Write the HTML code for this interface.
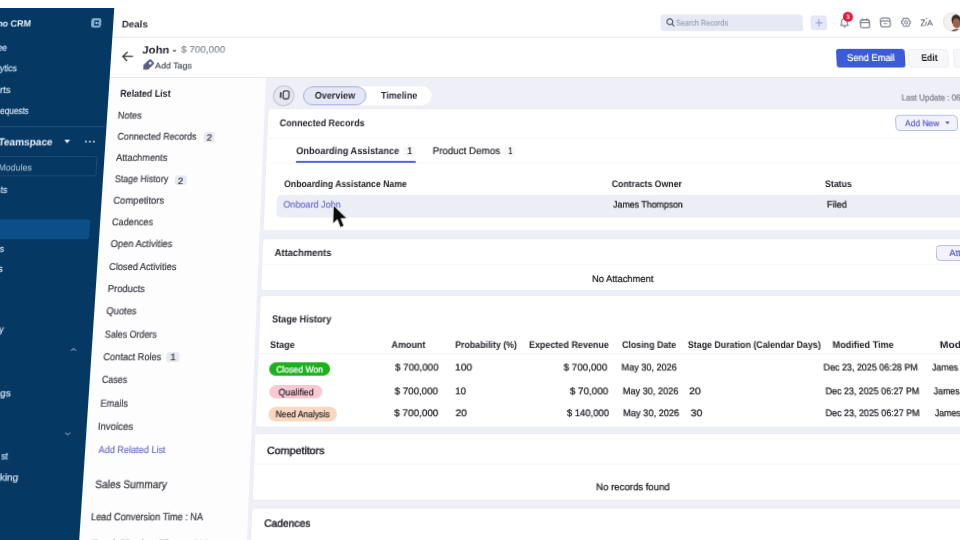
<!DOCTYPE html>
<html><head><meta charset="utf-8">
<style>
html,body{margin:0;padding:0;background:#fff;}
body{width:960px;height:540px;overflow:hidden;position:relative;font-family:"Liberation Sans",sans-serif;text-rendering:geometricPrecision;}
#flat{position:absolute;left:0;top:0;width:960px;height:540px;transform-origin:0 0;transform:matrix3d(1,0,0,0,-0.08088463,0.9582431,0,-0.0001546551,0,0,1,0,21.83885,11.27436,0,1.041757);}
#flat div{position:absolute;}
#flat .t{white-space:nowrap;line-height:1;transform-origin:0 0;-webkit-text-stroke:0.22px;}
#flat svg{position:absolute;overflow:visible;}
</style></head><body>
<div id="flat">
<div style="left:250.00px;top:71.59px;width:850.00px;height:628.41px;background:#efeff8"></div>
<div style="left:96.00px;top:71.59px;width:162.00px;height:628.41px;background:#fdfdfe"></div>
<div style="left:96.00px;top:28.29px;width:1004.00px;height:1.08px;background:#e5e5ea"></div>
<div style="left:96.00px;top:71.06px;width:1004.00px;height:1.06px;background:#e6e6ee"></div>
<div style="left:-80.00px;top:-2.63px;width:176.60px;height:702.63px;background:#053964"></div>
<div style="left:-80.00px;top:123.03px;width:174.50px;height:0.94px;background:#27527f"></div>
<div style="left:-13.61px;top:154.06px;width:103.87px;height:20.97px;border:1px solid #1d4a76;border-radius:3px;box-sizing:border-box"></div>
<div style="left:-13.36px;top:219.10px;width:100.63px;height:20.35px;background:#0a4f88;border-radius:3px"></div>
<div class="t" style="left:-34.89px;top:9.54px;font-size:9.823px;font-weight:700;-webkit-text-stroke:0;transform:scaleX(0.9500);color:#e6eef8;">Zoho CRM</div>
<div class="t" style="left:-21.22px;top:36.13px;font-size:9.934px;transform:scaleX(0.8805);color:#cfdef1;-webkit-text-stroke:0.25px">ee</div>
<div class="t" style="left:-16.62px;top:57.95px;font-size:9.902px;transform:scaleX(0.8912);color:#cfdef1;-webkit-text-stroke:0.25px">ytics</div>
<div class="t" style="left:-15.44px;top:80.69px;font-size:9.868px;transform:scaleX(1.0115);color:#cfdef1;-webkit-text-stroke:0.25px">rts</div>
<div class="t" style="left:-13.40px;top:103.27px;font-size:9.835px;transform:scaleX(0.8479);color:#cfdef1;-webkit-text-stroke:0.25px">equests</div>
<div class="t" style="left:-6.50px;top:184.91px;font-size:9.714px;transform:scaleX(0.8996);color:#cfdef1;-webkit-text-stroke:0.25px">ts</div>
<div class="t" style="left:-1.83px;top:245.08px;font-size:9.624px;transform:scaleX(0.9240);color:#cfdef1;-webkit-text-stroke:0.25px">s</div>
<div class="t" style="left:-2.25px;top:264.76px;font-size:9.595px;transform:scaleX(0.9713);color:#cfdef1;-webkit-text-stroke:0.25px">s</div>
<div class="t" style="left:4.19px;top:325.35px;font-size:9.505px;transform:scaleX(0.9382);color:#cfdef1;-webkit-text-stroke:0.25px">y</div>
<div class="t" style="left:9.51px;top:386.26px;font-size:9.415px;transform:scaleX(1.0531);color:#cfdef1;-webkit-text-stroke:0.25px">gs</div>
<div class="t" style="left:16.24px;top:446.69px;font-size:9.325px;transform:scaleX(0.8535);color:#cfdef1;-webkit-text-stroke:0.25px">st</div>
<div class="t" style="left:16.25px;top:466.77px;font-size:9.296px;transform:scaleX(1.0607);color:#cfdef1;-webkit-text-stroke:0.25px">king</div>
<div class="t" style="left:-12.24px;top:135.16px;font-size:10.826px;font-weight:700;-webkit-text-stroke:0;transform:scaleX(0.9469);color:#e9f0f9;">Teamspace</div>
<div class="t" style="left:-9.88px;top:161.55px;font-size:9.453px;transform:scaleX(0.9500);color:#9fb3c9;">Modules</div>
<div class="t" style="left:105.95px;top:9.77px;font-size:10.578px;font-weight:700;-webkit-text-stroke:0;transform:scaleX(0.9598);color:#2e2e38;">Deals</div>
<div style="left:666.27px;top:4.21px;width:147.85px;height:17.94px;background:#e7e9f5;border-radius:3px"></div>
<div class="t" style="left:682.06px;top:9.02px;font-size:9.068px;transform:scaleX(0.8361);color:#9ca2b6;">Search Records</div>
<div style="left:822.24px;top:4.86px;width:17.05px;height:16.43px;background:#e5e7f7;border-radius:3px"></div>
<div class="t" style="left:128.92px;top:38.17px;font-size:11.436px;font-weight:700;-webkit-text-stroke:0;transform:scaleX(1.0236);color:#232330;">John -</div>
<div class="t" style="left:169.16px;top:38.28px;font-size:9.931px;transform:scaleX(1.0341);color:#888c99;">$ 700,000</div>
<div class="t" style="left:143.05px;top:54.58px;font-size:9.007px;transform:scaleX(1.0213);color:#50545f;">Add Tags</div>
<div style="left:847.43px;top:40.64px;width:70.82px;height:20.52px;background:#3c5bd8;border-radius:3px"></div>
<div class="t" style="left:858.26px;top:46.88px;font-size:10.369px;transform:scaleX(0.9313);color:#ffffff;">Send Email</div>
<div style="left:921.25px;top:40.64px;width:42.18px;height:20.52px;background:#f7f7fa;border:1px solid #ececf2;border-radius:3px;box-sizing:border-box"></div>
<div class="t" style="left:934.53px;top:47.48px;font-size:10.369px;font-weight:700;-webkit-text-stroke:0;transform:scaleX(0.8484);color:#15151a;">Edit</div>
<div style="left:967.98px;top:40.64px;width:48.18px;height:20.52px;background:#f7f7fa;border:1px solid #ececf2;border-radius:3px;box-sizing:border-box"></div>
<div class="t" style="left:911.76px;top:88.37px;font-size:9.409px;transform:scaleX(0.8800);color:#7a7d88;">Last Update : 06:28 PM</div>
<div style="left:296.70px;top:80.88px;width:132.37px;height:19.80px;background:#ffffff;border-radius:10px"></div>
<div style="left:296.70px;top:80.88px;width:65.47px;height:19.80px;background:#e4e7f8;border:1px solid #a3aadb;border-radius:10px;box-sizing:border-box"></div>
<div class="t" style="left:309.16px;top:87.03px;font-size:10.307px;font-weight:700;-webkit-text-stroke:0;transform:scaleX(0.9044);color:#2a2a35;">Overview</div>
<div class="t" style="left:376.96px;top:86.82px;font-size:10.308px;font-weight:700;-webkit-text-stroke:0;transform:scaleX(0.9010);color:#2a2a35;">Timeline</div>
<div style="left:266.17px;top:79.87px;width:22.20px;height:21.86px;background:#e6e6ee;border:1px solid #c4c4cf;border-radius:50%;box-sizing:border-box"></div>
<div class="t" style="left:108.91px;top:84.75px;font-size:10.460px;font-weight:700;-webkit-text-stroke:0;transform:scaleX(0.8721);color:#22222c;">Related List</div>
<div class="t" style="left:108.37px;top:107.82px;font-size:10.274px;transform:scaleX(0.9112);color:#404048;">Notes</div>
<div class="t" style="left:109.02px;top:129.80px;font-size:10.240px;transform:scaleX(0.8918);color:#404048;">Connected Records</div>
<div class="t" style="left:109.14px;top:152.15px;font-size:10.206px;transform:scaleX(0.9204);color:#404048;">Attachments</div>
<div class="t" style="left:108.71px;top:174.25px;font-size:10.171px;transform:scaleX(0.8884);color:#404048;">Stage History</div>
<div class="t" style="left:108.92px;top:196.41px;font-size:10.137px;transform:scaleX(0.9398);color:#404048;">Competitors</div>
<div class="t" style="left:108.51px;top:218.21px;font-size:10.103px;transform:scaleX(0.9069);color:#404048;">Cadences</div>
<div class="t" style="left:108.95px;top:240.47px;font-size:10.069px;transform:scaleX(0.9307);color:#404048;">Open Activities</div>
<div class="t" style="left:108.93px;top:262.78px;font-size:10.034px;transform:scaleX(0.9230);color:#404048;">Closed Activities</div>
<div class="t" style="left:108.78px;top:285.24px;font-size:9.999px;transform:scaleX(0.9398);color:#404048;">Products</div>
<div class="t" style="left:108.74px;top:307.35px;font-size:9.965px;transform:scaleX(0.9353);color:#404048;">Quotes</div>
<div class="t" style="left:108.81px;top:329.60px;font-size:9.930px;transform:scaleX(0.8888);color:#404048;">Sales Orders</div>
<div class="t" style="left:108.92px;top:351.98px;font-size:9.896px;transform:scaleX(0.9190);color:#404048;">Contact Roles</div>
<div class="t" style="left:109.00px;top:374.31px;font-size:9.861px;transform:scaleX(0.8883);color:#404048;">Cases</div>
<div class="t" style="left:108.80px;top:396.68px;font-size:9.826px;transform:scaleX(0.9159);color:#404048;">Emails</div>
<div class="t" style="left:108.36px;top:418.79px;font-size:9.792px;transform:scaleX(0.9619);color:#404048;">Invoices</div>
<div style="left:197.00px;top:128.99px;width:11.23px;height:10.63px;background:#e9eaf1;border-radius:3px"></div>
<div class="t" style="left:199.88px;top:130.51px;font-size:9.498px;transform:scaleX(1.0396);color:#3c3c48;">2</div>
<div style="left:169.59px;top:173.58px;width:12.37px;height:10.49px;background:#e9eaf1;border-radius:3px"></div>
<div class="t" style="left:173.05px;top:175.06px;font-size:9.433px;transform:scaleX(1.0396);color:#3c3c48;">2</div>
<div style="left:171.34px;top:350.97px;width:12.73px;height:9.93px;background:#e9eaf1;border-radius:3px"></div>
<div class="t" style="left:174.78px;top:352.27px;font-size:9.179px;transform:scaleX(1.0874);color:#3c3c48;">1</div>
<div class="t" style="left:110.27px;top:441.11px;font-size:9.334px;transform:scaleX(0.9543);color:#7377c9;">Add Related List</div>
<div class="t" style="left:108.99px;top:472.92px;font-size:10.552px;transform:scaleX(0.9317);color:#44444c;-webkit-text-stroke:0.3px">Sales Summary</div>
<div class="t" style="left:106.68px;top:504.08px;font-size:9.800px;transform:scaleX(0.8999);color:#3a3a42;">Lead Conversion Time : NA</div>
<div class="t" style="left:108.94px;top:529.14px;font-size:9.761px;transform:scaleX(1.1281);color:#55555d;">Deal Closing Time : NA</div>
<div style="left:260.80px;top:104.15px;width:939.20px;height:126.41px;background:#ffffff;border:1px solid #ececf4;border-radius:3.5px;box-sizing:border-box"></div>
<div style="left:260.80px;top:238.14px;width:939.20px;height:52.59px;background:#ffffff;border:1px solid #ececf4;border-radius:3.5px;box-sizing:border-box"></div>
<div style="left:260.80px;top:295.40px;width:939.20px;height:128.16px;background:#ffffff;border:1px solid #ececf4;border-radius:3.5px;box-sizing:border-box"></div>
<div style="left:260.80px;top:428.80px;width:939.20px;height:64.70px;background:#ffffff;border:1px solid #ececf4;border-radius:3.5px;box-sizing:border-box"></div>
<div style="left:260.80px;top:499.18px;width:939.20px;height:174.01px;background:#ffffff;border:1px solid #ececf4;border-radius:3.5px;box-sizing:border-box"></div>
<div class="t" style="left:273.66px;top:115.87px;font-size:10.263px;font-weight:700;-webkit-text-stroke:0;transform:scaleX(0.8976);color:#22222c;">Connected Records</div>
<div style="left:904.17px;top:111.19px;width:63.75px;height:16.65px;background:#f1f2fb;border:1px solid #b9bde6;border-radius:4px;box-sizing:border-box"></div>
<div class="t" style="left:914.30px;top:115.83px;font-size:9.370px;transform:scaleX(0.9172);color:#5b62c9;">Add New</div>
<div style="left:401.26px;top:142.02px;width:13.24px;height:13.49px;background:#f8f8fb;border-radius:50%"></div>
<div class="t" style="left:405.03px;top:144.95px;font-size:10.069px;transform:scaleX(0.9536);color:#222;">1</div>
<div class="t" style="left:292.48px;top:144.97px;font-size:10.218px;font-weight:700;-webkit-text-stroke:0;transform:scaleX(0.9186);color:#25252e;">Onboarding Assistance</div>
<div class="t" style="left:431.44px;top:144.93px;font-size:10.365px;transform:scaleX(0.9618);color:#2a2a32;">Product Demos</div>
<div style="left:503.13px;top:142.02px;width:13.24px;height:13.49px;background:#f8f8fb;border-radius:50%"></div>
<div class="t" style="left:507.65px;top:144.95px;font-size:10.069px;transform:scaleX(0.7675);color:#222;">1</div>
<div style="left:292.46px;top:159.34px;width:122.03px;height:2.48px;background:#4b61d6;border-radius:1px"></div>
<div style="left:260.80px;top:134.52px;width:939.20px;height:0.63px;background:#f7f7fa"></div>
<div style="left:260.80px;top:161.30px;width:939.20px;height:0.62px;background:#fafafc"></div>
<div class="t" style="left:280.50px;top:178.73px;font-size:9.724px;font-weight:700;-webkit-text-stroke:0;transform:scaleX(0.8999);color:#222228;">Onboarding Assistance Name</div>
<div class="t" style="left:613.37px;top:178.63px;font-size:9.724px;font-weight:700;-webkit-text-stroke:0;transform:scaleX(0.9063);color:#222228;">Contracts Owner</div>
<div class="t" style="left:829.25px;top:178.63px;font-size:9.724px;font-weight:700;-webkit-text-stroke:0;transform:scaleX(0.9150);color:#222228;">Status</div>
<div style="left:274.35px;top:194.22px;width:730.39px;height:22.95px;background:#ededf5;border-radius:5px"></div>
<div class="t" style="left:281.16px;top:200.36px;font-size:9.691px;transform:scaleX(0.9437);color:#6d72d6;">Onboard John</div>
<div class="t" style="left:613.68px;top:200.36px;font-size:9.691px;transform:scaleX(0.9183);color:#16161c;">James Thompson</div>
<div class="t" style="left:829.75px;top:200.36px;font-size:9.691px;transform:scaleX(0.9575);color:#16161c;">Filed</div>
<div class="t" style="left:273.87px;top:248.53px;font-size:10.057px;font-weight:700;-webkit-text-stroke:0;transform:scaleX(0.9355);color:#22222c;">Attachments</div>
<div style="left:937.40px;top:244.70px;width:63.87px;height:16.29px;background:#f1f2fb;border:1px solid #b9bde6;border-radius:4px;box-sizing:border-box"></div>
<div class="t" style="left:950.62px;top:249.28px;font-size:9.181px;color:#5b62c9;">Attach</div>
<div style="left:260.80px;top:264.29px;width:939.20px;height:0.60px;background:#f8f8fa"></div>
<div class="t" style="left:592.16px;top:274.56px;font-size:9.581px;transform:scaleX(0.9764);color:#16161c;">No Attachment</div>
<div class="t" style="left:274.08px;top:314.56px;font-size:9.955px;font-weight:700;-webkit-text-stroke:0;transform:scaleX(0.9162);color:#22222c;">Stage History</div>
<div class="t" style="left:272.79px;top:340.07px;font-size:9.484px;font-weight:700;-webkit-text-stroke:0;transform:scaleX(0.9484);color:#222228;">Stage</div>
<div class="t" style="left:393.26px;top:340.07px;font-size:9.484px;font-weight:700;-webkit-text-stroke:0;transform:scaleX(0.9365);color:#222228;">Amount</div>
<div class="t" style="left:456.39px;top:340.07px;font-size:9.484px;font-weight:700;-webkit-text-stroke:0;transform:scaleX(0.9199);color:#222228;">Probability (%)</div>
<div class="t" style="left:529.34px;top:340.07px;font-size:9.484px;font-weight:700;-webkit-text-stroke:0;transform:scaleX(0.9363);color:#222228;">Expected Revenue</div>
<div class="t" style="left:620.83px;top:340.07px;font-size:9.484px;font-weight:700;-webkit-text-stroke:0;transform:scaleX(0.9216);color:#222228;">Closing Date</div>
<div class="t" style="left:686.16px;top:340.07px;font-size:9.484px;font-weight:700;-webkit-text-stroke:0;transform:scaleX(0.9247);color:#222228;">Stage Duration (Calendar Days)</div>
<div class="t" style="left:829.15px;top:340.07px;font-size:9.484px;font-weight:700;-webkit-text-stroke:0;transform:scaleX(0.9541);color:#222228;">Modified Time</div>
<div class="t" style="left:935.40px;top:340.07px;font-size:9.484px;font-weight:700;-webkit-text-stroke:0;transform:scaleX(1.0800);color:#222228;">Modified By</div>
<div style="left:260.80px;top:352.24px;width:939.20px;height:0.58px;background:#f4f4f7"></div>
<div style="left:272.83px;top:360.71px;width:60.28px;height:13.68px;background:#1db21d;border-radius:8px"></div>
<div class="t" style="left:280.19px;top:363.90px;font-size:9.019px;transform:scaleX(0.9402);color:#ffffff;">Closed Won</div>
<div style="left:273.69px;top:382.80px;width:52.71px;height:13.20px;background:#f9c8d1;border-radius:8px"></div>
<div class="t" style="left:283.01px;top:385.76px;font-size:8.988px;transform:scaleX(0.9783);color:#2a2a30;">Qualified</div>
<div style="left:273.66px;top:404.45px;width:67.59px;height:13.11px;background:#f9d7c0;border-radius:8px"></div>
<div class="t" style="left:281.01px;top:407.38px;font-size:8.957px;transform:scaleX(0.9323);color:#2a2a30;">Need Analysis</div>
<div class="t" style="left:397.39px;top:362.08px;font-size:9.451px;transform:scaleX(1.0199);color:#16161c;">$ 700,000</div>
<div class="t" style="left:456.43px;top:362.08px;font-size:9.451px;transform:scaleX(1.0793);color:#16161c;">100</div>
<div class="t" style="left:563.30px;top:362.08px;font-size:9.451px;transform:scaleX(1.0247);color:#16161c;">$ 700,000</div>
<div class="t" style="left:620.11px;top:362.08px;font-size:9.451px;transform:scaleX(0.9547);color:#16161c;">May 30, 2026</div>
<div class="t" style="left:819.08px;top:362.08px;font-size:9.451px;transform:scaleX(0.9376);color:#16161c;">Dec 23, 2025 06:28 PM</div>
<div class="t" style="left:925.81px;top:362.08px;font-size:9.451px;transform:scaleX(0.9200);color:#16161c;">James Thompson</div>
<div class="t" style="left:397.24px;top:384.05px;font-size:9.418px;transform:scaleX(1.0176);color:#16161c;">$ 700,000</div>
<div class="t" style="left:456.51px;top:384.05px;font-size:9.418px;color:#16161c;">10</div>
<div class="t" style="left:569.05px;top:384.05px;font-size:9.418px;transform:scaleX(1.0302);color:#16161c;">$ 70,000</div>
<div class="t" style="left:620.75px;top:384.05px;font-size:9.418px;transform:scaleX(0.9547);color:#16161c;">May 30, 2026</div>
<div class="t" style="left:686.43px;top:384.05px;font-size:9.418px;transform:scaleX(1.1187);color:#16161c;">20</div>
<div class="t" style="left:819.58px;top:384.05px;font-size:9.418px;transform:scaleX(0.9311);color:#16161c;">Dec 23, 2025 06:27 PM</div>
<div class="t" style="left:925.79px;top:384.05px;font-size:9.418px;transform:scaleX(0.9200);color:#16161c;">James Thompson</div>
<div class="t" style="left:397.08px;top:405.67px;font-size:9.386px;transform:scaleX(1.0365);color:#16161c;">$ 700,000</div>
<div class="t" style="left:456.94px;top:405.67px;font-size:9.386px;transform:scaleX(1.0678);color:#16161c;">20</div>
<div class="t" style="left:565.67px;top:405.67px;font-size:9.386px;transform:scaleX(0.9844);color:#16161c;">$ 140,000</div>
<div class="t" style="left:621.39px;top:405.67px;font-size:9.386px;transform:scaleX(0.9652);color:#16161c;">May 30, 2026</div>
<div class="t" style="left:687.02px;top:405.67px;font-size:9.386px;transform:scaleX(1.1026);color:#16161c;">30</div>
<div class="t" style="left:819.06px;top:405.67px;font-size:9.386px;transform:scaleX(0.9351);color:#16161c;">Dec 23, 2025 06:27 PM</div>
<div class="t" style="left:926.08px;top:405.67px;font-size:9.386px;transform:scaleX(0.9200);color:#16161c;">James Thompson</div>
<div class="t" style="left:273.75px;top:442.21px;font-size:9.897px;transform:scaleX(1.0505);color:#16161c;-webkit-text-stroke:0.35px #16161c">Competitors</div>
<div style="left:260.80px;top:458.44px;width:939.20px;height:0.57px;background:#f6f6f9"></div>
<div class="t" style="left:593.86px;top:475.54px;font-size:9.283px;color:#16161c;">No records found</div>
<div class="t" style="left:273.96px;top:510.30px;font-size:9.790px;transform:scaleX(1.0073);color:#16161c;-webkit-text-stroke:0.35px #16161c">Cadences</div>
<svg style="left:73.81px;top:7.56px;" width="10.40" height="10.27" viewBox="0 0 10.000 9.500" preserveAspectRatio="none"><rect x="0" y="0" width="10" height="9.5" rx="2.3" fill="#86acd6"/><rect x="3.2" y="2.3" width="4.6" height="5.1" fill="#053964"/><rect x="6.3" y="3.9" width="1.6" height="1.9" fill="#86acd6"/><circle cx="5.2" cy="4.85" r="1.05" fill="#b3d5f5"/></svg>
<svg style="left:55.21px;top:137.12px;" width="5.92" height="3.64" viewBox="0 0 5.800 3.500" preserveAspectRatio="none"><path d="M0 0 L5.8 0 L2.9 3.5 Z" fill="#e8f0fa"/></svg>
<svg style="left:75.62px;top:137.96px;" width="10.20" height="2.08" viewBox="0 0 10.000 2.000" preserveAspectRatio="none"><circle cx="1" cy="1" r="0.9" fill="#e8f0fa"/><circle cx="5" cy="1" r="0.9" fill="#e8f0fa"/><circle cx="9" cy="1" r="0.9" fill="#e8f0fa"/></svg>
<svg style="left:75.72px;top:347.07px;" width="5.93" height="3.42" viewBox="0 0 6.000 3.500" preserveAspectRatio="none"><path d="M0.5 3 L3 0.6 L5.5 3" fill="none" stroke="#6d90b8" stroke-width="1.1"/></svg>
<svg style="left:75.73px;top:428.04px;" width="5.85" height="3.33" viewBox="0 0 6.000 3.500" preserveAspectRatio="none"><path d="M0.5 0.6 L3 3 L5.5 0.6" fill="none" stroke="#6d90b8" stroke-width="1.1"/></svg>
<svg style="left:671.69px;top:8.21px;" width="8.84" height="9.30" viewBox="0 0 8.500 8.600" preserveAspectRatio="none"><circle cx="3.6" cy="3.6" r="2.9" fill="none" stroke="#5d6478" stroke-width="1.3"/><path d="M5.8 5.8 L8 8" stroke="#5d6478" stroke-width="1.3"/></svg>
<svg style="left:826.91px;top:9.08px;" width="7.69" height="8.00" viewBox="0 0 7.400 7.400" preserveAspectRatio="none"><path d="M3.7 0.2 V7.2 M0.2 3.7 H7.2" stroke="#8d95dc" stroke-width="1.0"/></svg>
<svg style="left:852.10px;top:6.70px;" width="10.40" height="11.89" viewBox="0 0 10.000 11.000" preserveAspectRatio="none"><path d="M1.2 8.2 Q2.2 7 2.2 5 Q2.2 1.6 5 1.6 Q7.8 1.6 7.8 5 Q7.8 7 8.8 8.2 Z" fill="none" stroke="#7b7f8b" stroke-width="1.1" stroke-linejoin="round"/><path d="M4 9.8 H6" stroke="#7b7f8b" stroke-width="1.1"/></svg>
<svg style="left:856.14px;top:1.17px;" width="10.41" height="10.83" viewBox="0 0 10.000 10.000" preserveAspectRatio="none"><circle cx="5" cy="5" r="5" fill="#e1183f"/><text x="5" y="7.3" font-size="6.5" font-weight="700" text-anchor="middle" fill="#fff" font-family="Liberation Sans">3</text></svg>
<svg style="left:872.97px;top:7.56px;" width="11.02" height="11.03" viewBox="0 0 10.600 10.200" preserveAspectRatio="none"><rect x="0.7" y="1.6" width="9.2" height="8" rx="2" fill="none" stroke="#7b7f8b" stroke-width="1.2"/><path d="M0.7 4.3 H9.9 M3.2 0.3 V2.4 M7.4 0.3 V2.4" stroke="#7b7f8b" stroke-width="1.1"/></svg>
<svg style="left:893.79px;top:7.13px;" width="11.54" height="11.24" viewBox="0 0 11.100 10.400" preserveAspectRatio="none"><rect x="0.7" y="0.8" width="9.7" height="8.8" rx="2.3" fill="none" stroke="#7b7f8b" stroke-width="1.2"/><path d="M0.7 4 H3 L3.9 3 L4.8 4 H6.3 L7.2 3 L8.1 4 H10.4 M3.8 6.3 H7.3" fill="none" stroke="#7b7f8b" stroke-width="1"/></svg>
<svg style="left:915.83px;top:7.35px;" width="10.40" height="10.81" viewBox="0 0 10.000 10.000" preserveAspectRatio="none"><path d="M9.50 5.00 L9.44 5.39 L9.28 5.75 L9.02 6.08 L8.70 6.35 L8.35 6.56 L8.03 6.75 L8.03 7.12 L8.01 7.53 L7.94 7.94 L7.79 8.33 L7.56 8.65 L7.25 8.90 L6.88 9.04 L6.48 9.08 L6.08 9.02 L5.68 8.88 L5.32 8.68 L5.00 8.50 L4.68 8.68 L4.32 8.88 L3.92 9.02 L3.52 9.08 L3.12 9.04 L2.75 8.90 L2.44 8.65 L2.21 8.33 L2.06 7.94 L1.99 7.53 L1.97 7.12 L1.97 6.75 L1.65 6.56 L1.30 6.35 L0.98 6.08 L0.72 5.75 L0.56 5.39 L0.50 5.00 L0.56 4.61 L0.72 4.25 L0.98 3.92 L1.30 3.65 L1.65 3.44 L1.97 3.25 L1.97 2.88 L1.99 2.47 L2.06 2.06 L2.21 1.67 L2.44 1.35 L2.75 1.10 L3.12 0.96 L3.52 0.92 L3.92 0.98 L4.32 1.12 L4.68 1.32 L5.00 1.50 L5.32 1.32 L5.68 1.12 L6.08 0.98 L6.48 0.92 L6.88 0.96 L7.25 1.10 L7.56 1.35 L7.79 1.67 L7.94 2.06 L8.01 2.47 L8.03 2.88 L8.03 3.25 L8.35 3.44 L8.70 3.65 L9.02 3.92 L9.28 4.25 L9.44 4.61 L9.50 5.00 Z" fill="none" stroke="#7b7f8b" stroke-width="1.1" stroke-linejoin="round"/><circle cx="5" cy="5" r="1.5" fill="none" stroke="#7b7f8b" stroke-width="1"/></svg>
<svg style="left:935.82px;top:7.35px;" width="13.52" height="9.95" viewBox="0 0 13.000 9.200" preserveAspectRatio="none"><path d="M0.7 2.7 H4.5 L0.9 8.3 H4.9" fill="none" stroke="#7b7f8b" stroke-width="1.05" stroke-linejoin="round"/><path d="M6.1 4.2 L5.4 8.3" stroke="#7b7f8b" stroke-width="1"/><circle cx="6.6" cy="1.2" r="0.75" fill="#7b7f8b"/><path d="M7.2 8.3 L9.8 2.9 L12.3 8.3 M8.6 6.6 H11.2" fill="none" stroke="#7b7f8b" stroke-width="1.05" stroke-linejoin="round"/></svg>
<svg style="left:960.23px;top:2.36px;" width="20.28" height="20.76" viewBox="0 0 19.500 19.200" preserveAspectRatio="none"><defs><clipPath id="av"><circle cx="9.75" cy="9.6" r="9.1"/></clipPath></defs><circle cx="9.75" cy="9.6" r="9.4" fill="#f4f2f1" stroke="#e0dddc" stroke-width="0.9"/><g clip-path="url(#av)"><ellipse cx="13.6" cy="7.8" rx="5.2" ry="6" fill="#3a2722"/><ellipse cx="13.2" cy="10.6" rx="3.9" ry="5" fill="#9c644a"/><ellipse cx="13.5" cy="20" rx="6.5" ry="3.6" fill="#6b4636"/></g></svg>
<svg style="left:108.11px;top:44.18px;" width="11.58" height="10.27" viewBox="0 0 11.200 9.600" preserveAspectRatio="none"><path d="M10.8 4.8 H1.2 M5.2 0.7 L1 4.8 L5.2 8.9" fill="none" stroke="#26262e" stroke-width="1.25" stroke-linejoin="round" stroke-linecap="round"/></svg>
<svg style="left:129.53px;top:52.52px;" width="11.36" height="11.52" viewBox="0 0 11.000 10.800" preserveAspectRatio="none"><g transform="translate(5.4 5.3) rotate(-45) scale(1.18) translate(-5.4 -3.1)"><path d="M0.3 3.1 L3 0.2 H9.2 Q10.6 0.2 10.6 1.6 V4.6 Q10.6 6 9.2 6 H3 Z" fill="#596285"/><circle cx="8.2" cy="3.1" r="1.15" fill="#fff"/></g></svg>
<svg style="left:272.85px;top:85.48px;" width="10.28" height="10.14" viewBox="0 0 10.000 9.600" preserveAspectRatio="none"><path d="M0.9 2.6 V7.2" stroke="#2c2c34" stroke-width="1.5" stroke-linecap="round"/><rect x="3.4" y="0.8" width="5.8" height="8" rx="1.6" fill="none" stroke="#3a3a44" stroke-width="1.3"/></svg>
<svg style="left:954.60px;top:118.32px;" width="4.71" height="2.93" viewBox="0 0 4.600 2.800" preserveAspectRatio="none"><path d="M0 0 H4.6 L2.3 2.8 Z" fill="#5b62c9"/></svg>
<svg style="left:329.81px;top:203.12px;" width="17.95" height="26.43" viewBox="0 0 17.800 26.000" preserveAspectRatio="none"><g transform="translate(1.5 1.4) scale(1.1) translate(-1.5 -1.4)"><path d="M1.5 1.4 L1.5 18.6 L5.4 14.6 L8.4 21.8 L11.6 20.3 L8.7 13.6 L14.2 13.6 Z" fill="#0a0a0a" stroke="#ffffff" stroke-width="0.6" stroke-linejoin="round"/></g></svg>
</div>
</body></html>
